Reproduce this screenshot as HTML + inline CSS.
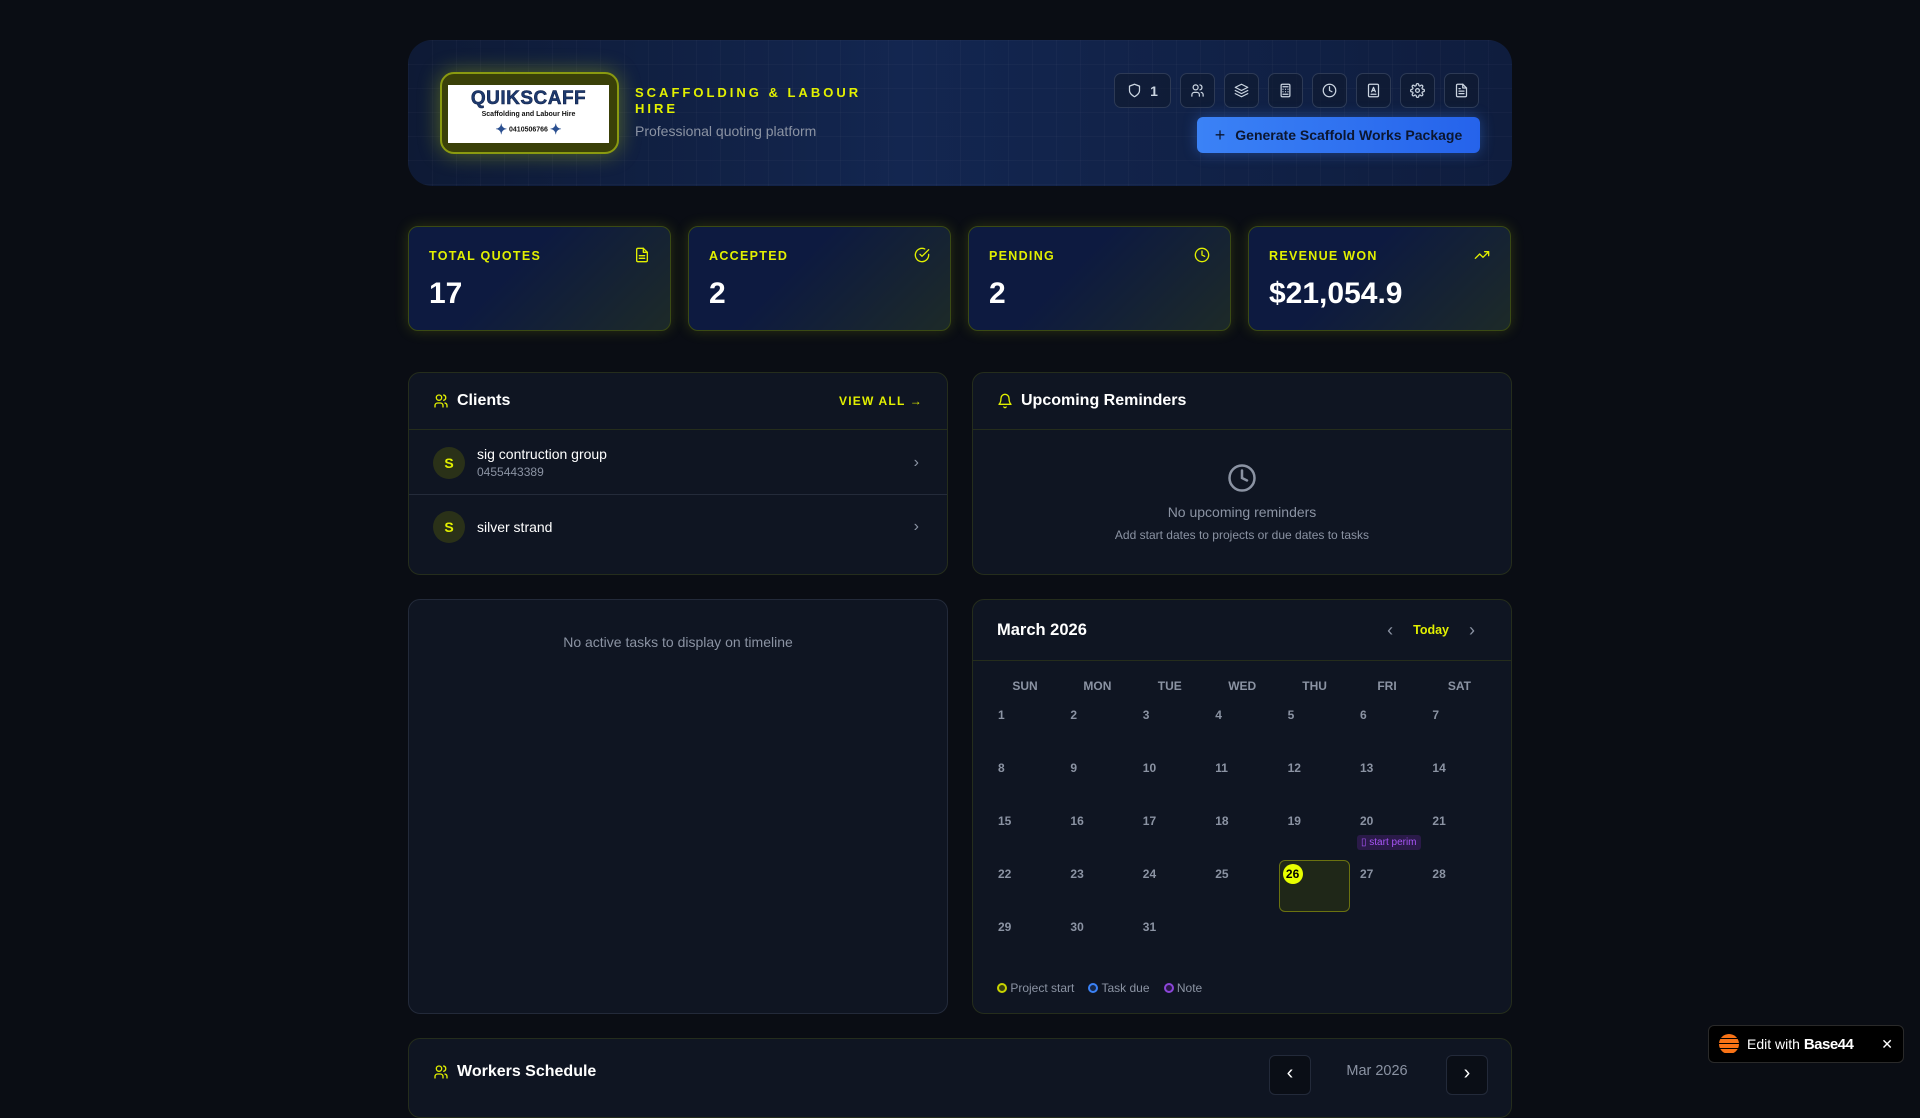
<!DOCTYPE html>
<html><head><meta charset="utf-8"><style>
*{box-sizing:border-box;margin:0;padding:0}
body{width:1920px;height:1080px;overflow:hidden;background:#0a0d14;font-family:"Liberation Sans",sans-serif;color:#fff;position:relative}
.abs{position:absolute}
.hdr{left:408px;top:40px;width:1104px;height:146px;border-radius:24px;background:linear-gradient(90deg,#0e1a35 0%,#132650 45%,#0f1d3e 100%);overflow:hidden}
.hdr:before{content:"";position:absolute;inset:0;background-image:linear-gradient(rgba(255,255,255,.025) 1px,transparent 1px),linear-gradient(90deg,rgba(255,255,255,.025) 1px,transparent 1px);background-size:24px 24px}
.logo{left:32px;top:32px;width:179px;height:82px;border:2px solid #8a9a10;border-radius:14px;background:#3a4008;box-shadow:0 0 22px rgba(220,240,0,.35)}
.logo .w{position:absolute;left:6px;top:11px;width:161px;height:58px;background:#fff;text-align:center}
.ib{top:33px;width:35px;height:35px;border:1px solid #2d3a55;border-radius:7px;background:rgba(15,25,45,.6);display:flex;align-items:center;justify-content:center}
.ib svg{width:15px;height:15px;stroke:#cbd5e1;fill:none;stroke-width:2;stroke-linecap:round;stroke-linejoin:round}
.gen{left:789px;top:77px;width:283px;height:36px;border-radius:6px;background:linear-gradient(90deg,#3b82f6,#2563eb);color:#0b1630;font-weight:bold;font-size:14px;display:flex;align-items:center;justify-content:center;gap:10px;box-shadow:0 0 14px rgba(59,130,246,.4)}
.stat{top:226px;width:263px;height:105px;border:1px solid #3a4a14;border-radius:10px;background:linear-gradient(135deg,#0d1a40 40%,#1d2a28 100%);box-shadow:0 0 14px rgba(200,230,0,.18)}
.stat .l{position:absolute;left:20px;top:22px;color:#e2f000;font-weight:bold;font-size:12.5px;letter-spacing:1.3px}
.stat .v{position:absolute;left:20px;top:50px;font-weight:bold;font-size:30px}
.stat svg{position:absolute;right:20px;top:20px;width:16px;height:16px;stroke:#e2f000;fill:none;stroke-width:2;stroke-linecap:round;stroke-linejoin:round}
.pan{border:1px solid #252d1c;border-radius:12px;background:#0f1522}
.ph{position:absolute;left:0;right:0;top:0;height:57px;border-bottom:1px solid #252d1c;display:flex;align-items:center;padding:0 24px;font-weight:bold;font-size:16px}
.ph svg{width:16px;height:16px;stroke:#e2f000;fill:none;stroke-width:2;margin-right:8px;stroke-linecap:round;stroke-linejoin:round}
.av{width:32px;height:32px;border-radius:50%;background:#2a3118;color:#e2f000;font-weight:bold;font-size:14px;display:flex;align-items:center;justify-content:center}
.dh{top:679px;width:72px;text-align:center;color:#8b93a3;font-weight:bold;font-size:12px}
.dn{color:#8b93a3;font-weight:bold;font-size:12px}
</style></head><body>

<div class="abs hdr">
 <div class="abs logo"><div class="w">
  <div style="font-family:'Liberation Sans';font-weight:900;font-size:19px;color:#1e3a6e;letter-spacing:0.5px;margin-top:3px;-webkit-text-stroke:0.5px #0a1a40">QUIKSCAFF</div>
  <div style="font-size:7px;color:#111;font-weight:bold;margin-top:1px">Scaffolding and Labour Hire</div>
  <div style="font-size:7px;color:#111;font-weight:bold;margin-top:3px"><span style="color:#2a4f90;font-size:14px;vertical-align:middle">✦</span> 0410506766 <span style="color:#2a4f90;font-size:14px;vertical-align:middle">✦</span></div>
 </div></div>
 <div class="abs" style="left:227px;top:45px;color:#e2f000;font-weight:bold;font-size:13px;letter-spacing:3px;line-height:16px;width:240px">SCAFFOLDING &amp; LABOUR HIRE</div>
 <div class="abs" style="left:227px;top:83px;color:#8b93a3;font-size:14px">Professional quoting platform</div>
 <div class="abs ib" style="left:706px;width:57px;gap:8px;color:#cbd5e1;font-weight:bold;font-size:14px"><svg viewBox="0 0 24 24"><path d="M12 22s8-4 8-10V5l-8-3-8 3v7c0 6 8 10 8 10z"/></svg>1</div>
 <div class="abs ib" style="left:772px"><svg viewBox="0 0 24 24"><circle cx="9" cy="7" r="4"/><path d="M3 21v-2a4 4 0 0 1 4-4h4a4 4 0 0 1 4 4v2M16 3.1a4 4 0 0 1 0 7.8M21 21v-2a4 4 0 0 0-3-3.9"/></svg></div>
 <div class="abs ib" style="left:816px"><svg viewBox="0 0 24 24"><path d="M12 2 2 7l10 5 10-5-10-5zM2 17l10 5 10-5M2 12l10 5 10-5"/></svg></div>
 <div class="abs ib" style="left:860px"><svg viewBox="0 0 24 24"><rect x="5" y="2" width="14" height="20" rx="2"/><path d="M8 6h8M8 10h.01M12 10h.01M16 10h.01M8 14h.01M12 14h.01M16 14h.01M8 18h8"/></svg></div>
 <div class="abs ib" style="left:904px"><svg viewBox="0 0 24 24"><circle cx="12" cy="12" r="10"/><path d="M12 6v6l4 2"/></svg></div>
 <div class="abs ib" style="left:948px"><svg viewBox="0 0 24 24"><rect x="4" y="2" width="16" height="20" rx="2"/><path d="M9 14l3-7 3 7M10 12h4M8 18h8"/></svg></div>
 <div class="abs ib" style="left:992px"><svg viewBox="0 0 24 24"><circle cx="12" cy="12" r="3"/><path d="M19.4 15a1.7 1.7 0 0 0 .3 1.8l.1.1a2 2 0 1 1-2.8 2.8l-.1-.1a1.7 1.7 0 0 0-1.8-.3 1.7 1.7 0 0 0-1 1.5V21a2 2 0 1 1-4 0v-.1a1.7 1.7 0 0 0-1.1-1.5 1.7 1.7 0 0 0-1.8.3l-.1.1a2 2 0 1 1-2.8-2.8l.1-.1a1.7 1.7 0 0 0 .3-1.8 1.7 1.7 0 0 0-1.5-1H3a2 2 0 1 1 0-4h.1a1.7 1.7 0 0 0 1.5-1.1 1.7 1.7 0 0 0-.3-1.8l-.1-.1a2 2 0 1 1 2.8-2.8l.1.1a1.7 1.7 0 0 0 1.8.3H9a1.7 1.7 0 0 0 1-1.5V3a2 2 0 1 1 4 0v.1a1.7 1.7 0 0 0 1 1.5 1.7 1.7 0 0 0 1.8-.3l.1-.1a2 2 0 1 1 2.8 2.8l-.1.1a1.7 1.7 0 0 0-.3 1.8V9a1.7 1.7 0 0 0 1.5 1H21a2 2 0 1 1 0 4h-.1a1.7 1.7 0 0 0-1.5 1z"/></svg></div>
 <div class="abs ib" style="left:1036px"><svg viewBox="0 0 24 24"><path d="M14 2H6a2 2 0 0 0-2 2v16a2 2 0 0 0 2 2h12a2 2 0 0 0 2-2V8z"/><path d="M14 2v6h6M16 13H8M16 17H8M10 9H8"/></svg></div>
 <div class="abs gen"><span style="font-size:18px;font-weight:normal">+</span>Generate Scaffold Works Package</div>
</div>

<div class="abs stat" style="left:408px"><div class="l">TOTAL QUOTES</div><div class="v">17</div><svg viewBox="0 0 24 24"><path d="M14 2H6a2 2 0 0 0-2 2v16a2 2 0 0 0 2 2h12a2 2 0 0 0 2-2V8z"/><path d="M14 2v6h6M16 13H8M16 17H8"/></svg></div>
<div class="abs stat" style="left:688px"><div class="l">ACCEPTED</div><div class="v">2</div><svg viewBox="0 0 24 24"><path d="M22 11.1V12a10 10 0 1 1-5.9-9.1"/><path d="M22 4 12 14l-3-3"/></svg></div>
<div class="abs stat" style="left:968px"><div class="l">PENDING</div><div class="v">2</div><svg viewBox="0 0 24 24"><circle cx="12" cy="12" r="10"/><path d="M12 6v6l4 2"/></svg></div>
<div class="abs stat" style="left:1248px"><div class="l">REVENUE WON</div><div class="v">$21,054.9</div><svg viewBox="0 0 24 24"><path d="m22 7-8.5 8.5-5-5L2 17M16 7h6v6"/></svg></div>

<div class="abs pan" style="left:408px;top:372px;width:540px;height:203px">
 <div class="ph"><svg viewBox="0 0 24 24"><circle cx="9" cy="7" r="4"/><path d="M3 21v-2a4 4 0 0 1 4-4h4a4 4 0 0 1 4 4v2M16 3.1a4 4 0 0 1 0 7.8M21 21v-2a4 4 0 0 0-3-3.9"/></svg>Clients<span style="margin-left:auto;color:#e2f000;font-size:12px;letter-spacing:1.2px">VIEW ALL →</span></div>
 <div class="abs" style="left:0;right:0;top:58px;height:64px;border-bottom:1px solid #242b3a;display:flex;align-items:center;padding:0 28px 0 24px">
  <div class="av">S</div><div style="margin-left:12px"><div style="font-size:14px">sig contruction group</div><div style="font-size:12px;color:#8b93a3;margin-top:3px">0455443389</div></div><div style="margin-left:auto;color:#8b93a3;font-size:16px">›</div></div>
 <div class="abs" style="left:0;right:0;top:123px;height:62px;display:flex;align-items:center;padding:0 28px 0 24px">
  <div class="av">S</div><div style="margin-left:12px;font-size:14px">silver strand</div><div style="margin-left:auto;color:#8b93a3;font-size:16px">›</div></div>
</div>

<div class="abs pan" style="left:972px;top:372px;width:540px;height:203px">
 <div class="ph"><svg viewBox="0 0 24 24"><path d="M6 8a6 6 0 0 1 12 0c0 7 3 9 3 9H3s3-2 3-9M10.3 21a1.9 1.9 0 0 0 3.4 0"/></svg>Upcoming Reminders</div>
 <svg class="abs" style="left:254px;top:90px;width:30px;height:30px" viewBox="0 0 24 24" fill="none" stroke="#8b93a3" stroke-width="2" stroke-linecap="round"><circle cx="12" cy="12" r="10"/><path d="M12 6v6l4 2"/></svg>
 <div class="abs" style="left:0;right:0;top:131px;text-align:center;color:#8b93a3;font-size:14px">No upcoming reminders</div>
 <div class="abs" style="left:0;right:0;top:155px;text-align:center;color:#8b93a3;font-size:12px">Add start dates to projects or due dates to tasks</div>
</div>

<div class="abs pan" style="left:408px;top:599px;width:540px;height:415px;border-color:#232a3a">
 <div class="abs" style="left:0;right:0;top:34px;text-align:center;color:#8b93a3;font-size:14px">No active tasks to display on timeline</div>
</div>

<div class="abs pan" style="left:972px;top:599px;width:540px;height:415px">
 <div class="ph" style="height:61px;font-size:16.5px;padding-right:36px">March 2026<span style="margin-left:auto;color:#8b93a3;font-weight:normal;font-size:18px">‹</span><span style="margin:0 20px;color:#e2f000;font-size:12.5px">Today</span><span style="color:#8b93a3;font-weight:normal;font-size:18px">›</span></div>
</div>
<div id="cal"></div>
<div class="abs" style="left:997px;top:981px;display:flex;gap:14px;font-size:12px;color:#8b93a3;align-items:center">
 <span><span style="display:inline-block;width:10px;height:10px;border-radius:50%;border:2px solid #c8d400;background:#3a4010;vertical-align:-1px"></span> Project start</span>
 <span><span style="display:inline-block;width:10px;height:10px;border-radius:50%;border:2px solid #3b82f6;background:#16284a;vertical-align:-1px"></span> Task due</span>
 <span><span style="display:inline-block;width:10px;height:10px;border-radius:50%;border:2px solid #8b46d8;background:#2a1848;vertical-align:-1px"></span> Note</span>
</div>

<div class="abs pan" style="left:408px;top:1038px;width:1104px;height:80px">
 <div class="ph" style="top:18px;border:none;height:30px"><svg viewBox="0 0 24 24"><circle cx="9" cy="7" r="4"/><path d="M3 21v-2a4 4 0 0 1 4-4h4a4 4 0 0 1 4 4v2M16 3.1a4 4 0 0 1 0 7.8M21 21v-2a4 4 0 0 0-3-3.9"/></svg>Workers Schedule</div>
 <div class="abs" style="left:860px;top:16px;width:42px;height:40px;border:1px solid #232a3a;border-radius:6px;background:#0a0e16;color:#fff;text-align:center;font-size:20px;line-height:34px">‹</div>
 <div class="abs" style="left:893px;top:24px;width:150px;text-align:center;color:#8b93a3;font-size:14.5px">Mar 2026</div>
 <div class="abs" style="left:1037px;top:16px;width:42px;height:40px;border:1px solid #232a3a;border-radius:6px;background:#0a0e16;color:#fff;text-align:center;font-size:20px;line-height:34px">›</div>
</div>

<div class="abs" style="left:1708px;top:1025px;width:196px;height:38px;background:#000;border:1px solid #2a2a2a;border-radius:6px;display:flex;align-items:center;padding:0 10px;font-size:14px;gap:8px">
 <div style="width:20px;height:20px;border-radius:50%;background:repeating-linear-gradient(#f97316 0 4px,#000 4px 5px)"></div>
 <span>Edit with <b style="letter-spacing:-0.5px;font-size:15px">Base44</b></span><span style="margin-left:auto;font-size:14px">✕</span>
</div>

<script>
var c=document.getElementById('cal'),h='';
var dn=['SUN','MON','TUE','WED','THU','FRI','SAT'];
for(var i=0;i<7;i++)h+='<div class="abs dh" style="left:'+(989+i*72.4)+'px">'+dn[i]+'</div>';
for(var d=1;d<=31;d++){var k=d-1,col=k%7,row=Math.floor(k/7);var x=989+col*72.4,y=703+row*53;
 if(d==26){h+='<div class="abs" style="left:'+x+'px;top:'+(y-2)+'px;width:71px;height:52px;border:1px solid #6b7210;border-radius:6px;background:#1f2718"></div><div class="abs" style="left:'+(x+4)+'px;top:'+(y+2)+'px;width:20px;height:20px;border-radius:50%;background:#e8ff00;color:#000;font-weight:bold;font-size:12px;text-align:center;line-height:20px">26</div>';}
 else h+='<div class="abs dn" style="left:'+(x+9)+'px;top:'+(y+5)+'px">'+d+'</div>';
 if(d==20)h+='<div class="abs" style="left:'+(x+6)+'px;top:'+(y+26)+'px;width:64px;height:15px;background:#2a1a48;border-radius:3px;color:#a855f7;font-size:10px;line-height:15px;padding-left:4px;white-space:nowrap;overflow:hidden">▯ start perim</div>';
}
c.innerHTML=h;
</script>
</body></html>
